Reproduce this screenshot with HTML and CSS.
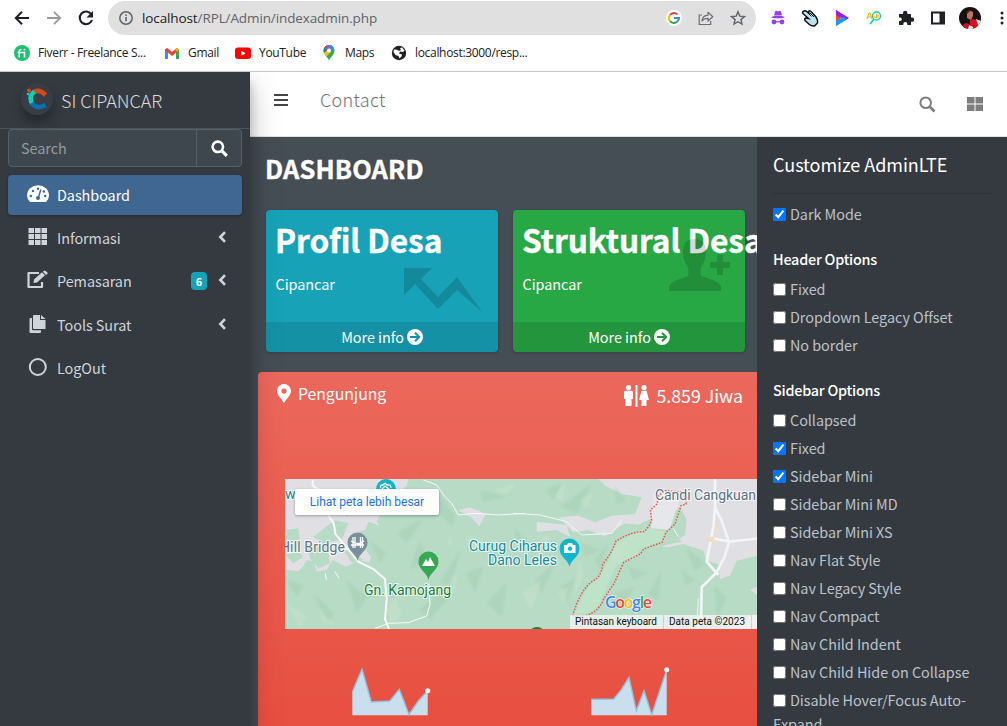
FILE: index.html
```html
<!DOCTYPE html>
<html lang="id">
<head>
<meta charset="utf-8">
<title>SI CIPANCAR</title>
<link rel="stylesheet" href="styles.css">
</head>
<body>
<header class="chrome">
  <div class="toolbar">
    <div class="slots">
      <span class="slot"><svg width="16" height="16" viewBox="0 0 16 16" fill="none" stroke="#202124" stroke-width="2"><path d="M15 8H2M8 1.8L1.8 8L8 14.2"/></svg></span>
      <span class="slot"><svg width="16" height="16" viewBox="0 0 16 16" fill="none" stroke="#9a9b9d" stroke-width="1.8"><path d="M1 8h13M8 1.8L14.2 8L8 14.2"/></svg></span>
      <span class="slot"><svg width="16" height="16" viewBox="0 0 16 16"><path d="M13.2 4.2A6.3 6.3 0 1 0 14 10" fill="none" stroke="#202124" stroke-width="2.1"/><path d="M15 1v6.5H8.5z" fill="#202124"/></svg></span>
    </div>
    <div class="omnibox">
      <svg width="16" height="16" viewBox="0 0 16 16"><circle cx="8" cy="8" r="6.2" fill="none" stroke="#5f6368" stroke-width="1.5"/><path d="M7.2 7h1.6v4.3H7.2zM7.2 4.4h1.6V6H7.2z" fill="#5f6368"/></svg>
      <span class="url"><b>localhost</b>/RPL/Admin/indexadmin.php</span>
      <div class="slots">
        <span class="slot"><svg width="16" height="16" viewBox="0 0 16 16"><circle cx="8" cy="8" r="8" fill="#fff"/><g fill="none" stroke-width="2"><path d="M4 5A5 5 0 0 1 11.6 4.4" stroke="#ea4335"/><path d="M4 5a5 5 0 0 0 0 6" stroke="#fbbc05"/><path d="M4 11a5 5 0 0 0 7.4.6" stroke="#34a853"/><path d="M8 8h5a5 5 0 0 1-1.6 3.6" stroke="#4285f4"/></g></svg></span>
        <span class="slot"><svg width="16" height="16" viewBox="0 0 16 16" fill="none" stroke="#6b6e72" stroke-width="1.2"><path d="M4 5H1.2v9.5h11.5V11"/><path d="M4 11c.4-3.7 2.500-5.600 6-5.800V2.300L14.800 6.800L10 11V8.400C7.500 8.300 5.500 9 4 11z" stroke-linejoin="round"/></svg></span>
        <span class="slot"><svg width="16" height="16" viewBox="0 0 16 16" fill="none" stroke="#5f6368" stroke-width="1.4"><path d="M8 1.800l1.800 4.300 4.700.4-3.600 3.100 1.100 4.500L8 11.700l-4 2.400 1.100-4.500L1.500 6.500l4.700-.4z"/></svg></span>
      </div>
    </div>
    <div class="slots">
      <span class="slot"><svg width="16" height="16" viewBox="0 0 16 16" fill="#9540e8"><path d="M4 5.500l1-4 1.500-.8L8 1.500l1.500-.8 1.500.8 1 4z"/><path d="M1 7.300L4 6h8l3 1.300L12 8.300H4z"/><circle cx="4" cy="12" r="2.400"/><circle cx="12" cy="12" r="2.400"/><path d="M5 11.200h6v1.200H5z"/></svg></span>
      <span class="slot"><svg width="18" height="18" viewBox="0 0 18 18"><path d="M2 2.500Q4 1 6 2.800L8 4.500 7.500 2.500Q9 1 10.500 3L15 8q2 3 1.500 6l-3 3q-3 .3-5-1.500L4 11.500Q3 9.500 5 9l2.500.5L2.500 5Q1 3.800 2 2.500z" fill="#b9e6ee" stroke="#111" stroke-width="1.500"/><path d="M6 3l4.500 4.500M9 4l4 4" stroke="#111" fill="none"/></svg></span>
      <span class="slot"><svg width="16" height="16" viewBox="0 0 16 16"><path d="M2 0v16l4-3V3z" fill="#ff4b12"/><path d="M2 0l13 8-4 2.600L2 5z" fill="#a613f5"/><path d="M2 16l11-6.500-4-2.700L2 11z" fill="#139cf5"/></svg></span>
      <span class="slot"><svg width="16" height="16" viewBox="0 0 16 16" fill="none"><path d="M0 0h16v16H0z" fill="#f3fbf7"/><path d="M1 9l2-6h1l2 6M2 7h3" stroke="#f4b400"/><circle cx="10.500" cy="6" r="4" stroke="#26c6a2" stroke-width="1.300"/><path d="M8 9l-4 5" stroke="#26c6a2" stroke-width="1.600"/><path d="M9 8V6m1.500 2V4M12 8V5" stroke="#f4b400"/></svg></span>
      <span class="slot"><svg width="16" height="16" viewBox="0 0 16 16"><path d="M1 4h4V3a2.200 2.200 0 0 1 4.400 0v1H13v3.500h1a2.100 2.100 0 0 1 0 4.200h-1V15H9.300v-1a2 2 0 0 0-4 0v1H1v-4h1a1.800 1.800 0 0 0 0-3.600H1z" fill="#202124"/></svg></span>
      <span class="slot"><svg width="16" height="16" viewBox="0 0 16 16"><path d="M1 1.500h14v13H1zM3 3.500v9h6.500v-9z" fill="#202124" fill-rule="evenodd"/></svg></span>
      <span class="slot"><svg class="avatar" width="22" height="22" viewBox="0 0 22 22"><path d="M0 0h22v22H0z" fill="#17100f"/><path d="M11 13l4-1 4 2 2 8H10z" fill="#d51220"/><path d="M3 22q0-5 4-6l3 1 1 5z" fill="#c90f20"/><path d="M17 12l5 2v6l-3-2z" fill="#eee"/><path d="M8 5q3-3 6 0l0 4-2 4-4-2z" fill="#bb755f"/><path d="M7 5q3-5 7 0l-3-1-3 3z" fill="#3a211a"/><path d="M10 18l4 2v2h-5z" fill="#eee"/></svg></span>
      <span class="slot"><svg width="4" height="16" viewBox="0 0 4 16" fill="#202124"><circle cx="2" cy="3" r="1.500"/><circle cx="2" cy="8" r="1.500"/><circle cx="2" cy="13" r="1.500"/></svg></span>
    </div>
  </div>
  <nav class="bookmarks">
    <span class="bookmark"><svg width="16" height="16" viewBox="0 0 16 16"><circle cx="8" cy="8" r="8" fill="#1dbf73"/><path d="M5.200 12.500V6.300q0-2 2.300-1.900M3.700 7.500h6.800v5" fill="none" stroke="#fff" stroke-width="1.500"/><circle cx="10.400" cy="4.700" r=".9" fill="#fff"/></svg><span>Fiverr - Freelance S...</span></span>
    <span class="bookmark"><svg width="16" height="16" viewBox="0 0 16 16" fill="none" stroke-width="3"><path d="M2.500 14V4" stroke="#4285f4"/><path d="M13.500 14V4" stroke="#34a853"/><path d="M2 4l6 5 6-5" stroke="#ea4335"/><path d="M12 5.600l2-1.500" stroke="#fbbc04"/></svg><span>Gmail</span></span>
    <span class="bookmark"><svg width="16" height="16" viewBox="0 0 16 16"><rect y="2.500" width="16" height="11.500" rx="3" fill="#f00"/><path d="M6.200 5.700v5l4.500-2.500z" fill="#fff"/></svg><span>YouTube</span></span>
    <span class="bookmark"><svg width="16" height="16" viewBox="0 0 16 16"><path d="M8 16C7.500 12 2.500 10.500 2.500 5.500a5.500 5.500 0 0 1 11 0C13.500 10.500 8.500 12 8 16z" fill="#34a853"/><path d="M3 8L11 .9A5.500 5.500 0 0 0 2.500 5.500z" fill="#1a73e8"/><path d="M3.200 2.800l3.300 2.800L11.600 1.300A5.500 5.500 0 0 0 3.200 2.800z" fill="#ea4335"/><path d="M6.500 5.600L13 3.200A5.500 5.500 0 0 0 7 .1z" fill="#4285f4"/><path d="M3 7.800L6.500 5l3 2.500L5 11.800z" fill="#fbbc04"/><circle cx="8" cy="5.500" r="2" fill="#fff"/></svg><span>Maps</span></span>
    <span class="bookmark"><svg width="16" height="16" viewBox="0 0 16 16"><circle cx="8" cy="8" r="7.200" fill="#202124"/><path d="M3 4.500l3 .2 2 1.300 2-1-1-2 2-.5 2.500 3-1.500 1.500-3-.5-1 2 3 1-.5 2-2 2-1-2.500-3-1L2.500 7z" fill="#fff"/></svg><span>localhost:3000/resp...</span></span>
  </nav>
</header>

<div class="app">
  <aside class="sidebar">
    <div class="brand">
      <span class="brand-logo"><svg width="24" height="24" viewBox="0 0 24 24" fill="none" stroke-width="4.600"><path d="M20.500 8Q14 1.500 8.500 5.500" stroke="#d24a20"/><path d="M9.500 4.500Q3 9.500 7.500 17" stroke="#18cbb0"/><path d="M6.500 16q5 7 14 2" stroke="#0a72a8"/><circle cx="4" cy="3.500" r="2" fill="#d24a20"/><circle cx="3" cy="7" r="1.300" fill="#18cbb0"/></svg></span>
      <span class="brand-text">SI CIPANCAR</span>
    </div>
    <div class="search"><span class="search-text">Search</span><span class="search-btn"><svg width="17" height="17" viewBox="0 0 17 17" fill="none" stroke="#fff"><circle cx="6.800" cy="6.800" r="5.200" stroke-width="2.600"/><path d="M10.800 10.800l5 5" stroke-width="3.200"/></svg></span></div>
    <nav class="menu">
      <div class="item active"><svg class="ico" width="22" height="18" viewBox="0 0 22 18"><path d="M3 17Q0 14 0 10.500a11 10.200 0 0 1 22 0Q22 14 19 17z" fill="#fff"/><g fill="#3f6791"><circle cx="3.800" cy="11" r="1.200"/><circle cx="6" cy="6" r="1.200"/><circle cx="11" cy="3.800" r="1.200"/><circle cx="16.800" cy="6.500" r="1.200"/><circle cx="18.200" cy="11" r="1.200"/></g><path d="M13.800 4.500L11.300 13" stroke="#3f6791" stroke-width="1.400"/><circle cx="11" cy="13" r="2" fill="#3f6791"/></svg><span>Dashboard</span></div>
      <div class="item"><svg class="ico" width="22" height="18" viewBox="0 0 22 18" fill="#ced4da"><path d="M1.500 0h5.500v5H1.500zM8 0h5.500v5H8zM14.500 0H20v5h-5.500zM1.500 6H7v5H1.500zM8 6h5.500v5H8zM14.500 6H20v5h-5.500zM1.500 12H7v5H1.500zM8 12h5.500v5H8zM14.500 12H20v5h-5.500z"/></svg><span>Informasi</span><svg class="chev" width="8" height="12" viewBox="0 0 8 12"><path d="M7 1.200L2.300 6 7 10.800" fill="none" stroke="#ced4da" stroke-width="2.600"/></svg></div>
      <div class="item"><svg class="ico" width="22" height="18" viewBox="0 0 22 18"><path d="M12 2H1.500v14H15v-5" fill="none" stroke="#ced4da" stroke-width="2.200" stroke-linejoin="round"/><path d="M6.500 12l.5-3.500 8-7.200 3 3-8 7.200zM15.900.700l1.200-1q.8-.4 1.500.2l1.800 1.700q.6.8 0 1.500L19 4z" fill="#ced4da"/></svg><span>Pemasaran</span><em class="pill">6</em><svg class="chev" width="8" height="12" viewBox="0 0 8 12"><path d="M7 1.200L2.300 6 7 10.800" fill="none" stroke="#ced4da" stroke-width="2.600"/></svg></div>
      <div class="item"><svg class="ico" width="22" height="18" viewBox="0 0 22 18" fill="#ced4da"><path d="M7 0h6v5h5.500v9H7q-1 0-1-1V1q0-1 1-1zM14 0l4.500 4H14z"/><path d="M3.500 3H5v11q0 1.200 1.300 1.200H14V17q0 1-1 1H3.500q-1 0-1-1V4q0-1 1-1z"/></svg><span>Tools Surat</span><svg class="chev" width="8" height="12" viewBox="0 0 8 12"><path d="M7 1.200L2.300 6 7 10.800" fill="none" stroke="#ced4da" stroke-width="2.600"/></svg></div>
      <div class="item"><svg class="ico" width="22" height="18" viewBox="0 0 22 18"><circle cx="10.800" cy="9" r="8" fill="none" stroke="#ced4da" stroke-width="2"/></svg><span>LogOut</span></div>
    </nav>
  </aside>

  <main class="main">
    <div class="navbar">
      <svg class="burger" width="14" height="12" viewBox="0 0 14 12"><path d="M0 0h14v2H0zM0 5h14v2H0zM0 10h14v2H0z" fill="#454545"/></svg>
      <span class="contact">Contact</span>
      <svg class="nav-search" width="17" height="17" viewBox="0 0 17 17" fill="none" stroke="#7d7d7d"><circle cx="6.700" cy="6.700" r="5.300" stroke-width="2"/><path d="M10.700 10.700l4.800 4.800" stroke-width="2.600"/></svg>
      <svg class="nav-grid" width="16" height="14" viewBox="0 0 16 14"><path d="M0 0h7.500v6.500H0zM8.500 0H16v6.500H8.500zM0 7.500h7.500V14H0zM8.500 7.500H16V14H8.500z" fill="#7d7d7d"/></svg>
    </div>
    <div class="body">
      <section class="content">
        <h1>DASHBOARD</h1>
        <div class="boxes">
          <article class="box info">
            <h3>Profil Desa</h3><p>Cipancar</p>
            <svg class="art" width="232" height="112" viewBox="0 0 232 112"><path d="M138 58h28l-11 11 17 18 19-20 25 35-25-22-19 19-23-25-11 11z" fill="#000" fill-opacity=".15"/></svg>
            <div class="more"><span>More info</span><svg width="16" height="16" viewBox="0 0 16 16"><circle cx="8" cy="8" r="8" fill="#fff"/><path d="M3 8h9M8 3.800L12.200 8 8 12.200" fill="none" stroke="#178fa3" stroke-width="2"/></svg></div>
          </article>
          <article class="box success">
            <h3>Struktural Desa</h3><p>Cipancar</p>
            <svg class="art" width="232" height="112" viewBox="0 0 232 112"><path d="M170 40q1-11 11.500-11t11.500 11q0 11-5 17-1 6 0 9l12 4q8 3 8 8v3h-52v-3q0-5 8-8l11-4q1-3 0-9-5-6-5-17zM204 45h6v7h7v6h-7v7h-6v-7h-7v-6h7z" fill="#000" fill-opacity=".15"/></svg>
            <div class="more"><span>More info</span><svg width="16" height="16" viewBox="0 0 16 16"><circle cx="8" cy="8" r="8" fill="#fff"/><path d="M3 8h9M8 3.800L12.200 8 8 12.200" fill="none" stroke="#25963e" stroke-width="2"/></svg></div>
          </article>
        </div>
        <article class="visitors">
          <div class="visitors-head">
            <svg class="pin" width="14" height="19" viewBox="0 0 14 19"><path d="M7 0a7 7 0 0 1 7 7c0 4-4 7-7 12C4 14 0 11 0 7a7 7 0 0 1 7-7zm0 4.500a2.600 2.600 0 1 0 0 5.200 2.600 2.600 0 0 0 0-5.200z" fill="#fff"/></svg>
            <span class="pengunjung">Pengunjung</span>
            <svg class="people" width="25" height="22" viewBox="0 0 25 22" fill="#fff"><circle cx="4.500" cy="2.600" r="2.600"/><path d="M1.500 5.700h6q1.500 0 1.500 1.500V14H7.500v7h-6v-7H0V7.200q0-1.500 1.500-1.500z"/><path d="M11.500 0h2v22h-2z"/><circle cx="20" cy="2.600" r="2.600"/><path d="M17.500 5.700h5L25 15h-2.500v6h-5v-6H15z"/></svg>
            <span class="jiwa">5.859 Jiwa</span>
          </div>
          <div class="map">
            <svg width="472" height="150" viewBox="0 0 472 150">
              <rect width="472" height="150" fill="#b7dbc4"/>
              <g transform="translate(-5 -9) scale(.33333)">
                <path d="M15 27h370l-5 20-55 45-35 60 8 15-32-12-10 25-20 5 15 45 22 30-5 18-30-8-40 20-40-20-18 30-30 5-8-30-20-5-15 22-12 12-40-5z" fill="#dfdfe4"/>
                <path d="M535 120l35-8 48 20-12 20-8 18-22-26z" fill="#dfdfe4"/>
                <g fill="#b7dbc4"><path d="M20 180l35-5 5 40-20 30-25-20zM70 90l60 10-15 25zM100 200l65-50 40 10-20 50-60 10zM80 225l60-5 10 60-35 15-25-30zM180 90l40-30 20 45-40 35zM15 255l40-10 15 15-30 20zM190 240l30 5 30 25-35 8z"/></g>
                <g class="relief" fill="#a6ceb4"><path d="M270 210l50 40-20 30zM350 190l80-45-50 75zM390 300l30-90 20 60zM560 310l50-20-25 80zM480 340l60-100-25 110zM100 370l60 60-15 35zM480 80l45 55-10 35-40-45zM600 60l80 20-70 15zM420 420l60-60 20 30-50 60zM20 330l50 15-20 35zM200 330l60 50-30 50zM620 400l60-60-15 100z"/></g>
                <g class="relief" fill="#c9e3cd"><path d="M370 90l45-30-20 55zM420 70l35 45-20 25zM560 200l50 10-40 35zM20 400l60 40-20 35zM120 420l50 50-45-15zM320 420l25-40 20 50-30 40zM500 350l30-45-5 70zM640 60l70-20-30 35zM500 230l10-40 8 30z"/></g>
                <g fill="none" stroke="#f8f9fa"><path d="M100 30q-10 20 20 30l18 60 12 25q15 10 15 45l70 85 45 22 35 30 5 60-5 60 12 30" stroke-width="6"/><path d="M430 30l40 15 25 35 20 20 20 35 50-5 70 5 80-5" stroke-width="3"/><path d="M325 460l60-2 55-20 10-35-3-60M325 460l-40 15M135 310l5 20M165 305l12 20" stroke-width="3"/></g>
              </g>
              <g transform="translate(230 -9) scale(.33333)">
                <path d="M250 27h480v230l-65 15-20 45-30 10-5-45-35-10-10-30-60-20-45 10-120-10-5-55-85 50-60-15-60-60 60-5 50 20 50-20 70-5 20-50-60-10-50-25z" fill="#dfdfe4"/>
                <path d="M160 190l60-10 50 20 60-40 40 5 60-30 40 40 30 40-50 10-60 40-150 30z" fill="#b7dbc4"/>
                <path d="M65 155l90 10 10 35-40-20-60 5z" fill="#dfdfe4"/>
                <path d="M735 260l-60 15-20 50-60 15-10 110 20 27h130z" fill="#b7dbc4"/>
                <path d="M705 360l30-15v35zM650 450l85-20v47h-90z" fill="#dfdfe4"/>
                <path d="M175 438l45-90 45-45 35-80 50-35 55-15 48 15-15 30-65 20-10 25-60 25-25 55-25 60-25 25z" fill="#bfe3c8"/>
                <path d="M450 150l40-35 10 5 15 30-5 45-15 10-40-25z" fill="#b7dbc4"/>
                <g class="relief" fill="#a6ceb4"><path d="M90 60l50-20-25 50zM140 110l90-70-45 90zM300 50l30 40-25 15zM240 270l40-50-25 80zM340 290l55 20-40 20zM400 370l40-70-10 90zM500 300l40 30-30 15zM200 220l55 20-45 20zM140 350l40-25-30 90zM60 330l60-50-40 90zM300 370l60-20-40 60zM510 230l60 50-30 25zM600 350l35 30-30 70zM0 180l35 30-30 40z"/></g>
                <g class="relief" fill="#c9e3cd"><path d="M195 90l40-25-20 55zM120 80l30-45-5 60zM290 250l50-40-40 80zM190 270l20 40-35 70zM130 365l30-15-10 65zM70 220l25-30 20 60zM20 370l60-40-30 90z"/></g>
                <g fill="none" stroke="#f4f5f7"><path d="M600 27v85l20 40 22 65-12 40-25 50-45 45-2 100-10 25M600 110l-5 60-20 105 35 40M595 205l50 10 85-10" stroke-width="8"/><path d="M-5 130l80 5 80 20 45 40 90-5 30-40M475 175l15 25M545 475l5-90" stroke-width="3"/></g>
                <path d="M415 70l85-5-5 20-32 95-55-5z" fill="#e6e7ea"/><path d="M580 200h18v16h-18zM603 166l12 10-12 8z" fill="#f4dfb8"/>
                <path d="M173 438q20-75 60-105 25-10 30-50 28-35 40-70 50-30 85-28 15-15 22-35l-4-30 20-18 5-25 20-15 50 5 15 10 -3 25-15 5-18 55-27 25-12 30-55 20-10 15-50 25q-15 35-30 65l-30 45q-15 40-55 50z" fill="none" stroke="#e75446" stroke-width="4.500" stroke-dasharray="4.500 4.500"/>
              </g>
              <circle cx="101" cy="10" r="10" fill="#12b5cb"/><path d="M96 9q-2-3 2-3 2-3 4 0 4-1 4 3M97 10l3-3 4 3" fill="none" stroke="#fff" stroke-width="1.300"/>
              <path d="M72.500 82c-1-7-10-10-10-18.500a10 10 0 0 1 20 0C82.500 72 73.500 75 72.500 82z" fill="#78909c"/><path d="M68 58v11M70 58v11M75.500 58v11M77.500 58v11M66 62q7 5 13 0M66 66h13" fill="none" stroke="#fff" stroke-width="1.300"/>
              <path d="M143.500 101c-1-7-10-10-10-18.500a10 10 0 0 1 20 0C153.500 91 144.500 94 143.500 101z" fill="#34a853"/><path d="M137 87l4-7 2 3 2-5 5 9z" fill="#fff"/>
              <path d="M284.500 88c-1-7-10-10-10-18.500a10 10 0 0 1 20 0C294.500 78 285.500 81 284.500 88z" fill="#12b5cb"/><path d="M279 66h3l1-2h4l1 2h2.500v8H279zM285 67.500a2.200 2.200 0 1 0 .1 0z" fill="#fff" fill-rule="evenodd"/>
              <circle cx="252" cy="157" r="9" fill="#188038"/>
              <g class="place"><text x="0" y="20" fill="#0f8b99">w</text><text x="-5" y="73" fill="#5b7383" textLength="65">Hill Bridge</text><text x="79" y="116" fill="#188038" textLength="87">Gn. Kamojang</text><text x="184" y="72" fill="#0f8b99" textLength="88">Curug Ciharus</text><text x="203" y="86" fill="#0f8b99" textLength="69">Dano Leles</text><text x="370" y="21" fill="#5b7383" textLength="101">Candi Cangkuan</text></g>
              <text class="google" x="320" y="129" textLength="47"><tspan fill="#4285f4">G</tspan><tspan fill="#ea4335">o</tspan><tspan fill="#fbbc05">o</tspan><tspan fill="#4285f4">g</tspan><tspan fill="#34a853">l</tspan><tspan fill="#ea4335">e</tspan></text>
              <path d="M285 136h187v14H285z" fill="#f5f5f5" fill-opacity=".75"/><path d="M378.500 136v14M466.500 136v14" stroke="#c7d3cc"/>
              <g class="credit"><text x="290" y="146" textLength="82">Pintasan keyboard</text><text x="384" y="146" textLength="76">Data peta ©2023</text></g>
            </svg>
            <a class="map-link">Lihat peta lebih besar</a>
          </div>
          <div class="sparks">
            <svg width="84" height="54" viewBox="0 0 84 54"><path d="M4.300 49.300V26L14 3l9.300 33 18.400-1 9.600-11.700L61 48.500 70.300 35l9.400-10.300v24.600z" fill="#c9dfed"/><path d="M4.300 26L14 3l9.300 33 18.400-1 9.600-11.700L61 48.500 70.300 35l9.400-10.300" fill="none" stroke="#92c1dc" stroke-width="1.400"/><circle cx="79.700" cy="24.700" r="2.500" fill="#f6f8fb"/></svg>
            <svg width="84" height="54" viewBox="0 0 84 54"><path d="M4.300 49.300V33.300l22.400-.3 7.600-9.300L42 11.300l7.300 33.400L57 24.700l7.700 24L79.700 3.700v45.600z" fill="#c9dfed"/><path d="M4.300 33.300l22.400-.3 7.600-9.300L42 11.300l7.300 33.400L57 24.700l7.700 24L79.700 3.700" fill="none" stroke="#92c1dc" stroke-width="1.400"/><circle cx="79.700" cy="3.700" r="2.500" fill="#f6f8fb"/></svg>
          </div>
        </article>
      </section>
      <aside class="control">
        <h5>Customize AdminLTE</h5>
        <label class="first"><input type="checkbox" checked>Dark Mode</label>
        <h6>Header Options</h6>
        <label><input type="checkbox">Fixed</label>
        <label><input type="checkbox">Dropdown Legacy Offset</label>
        <label><input type="checkbox">No border</label>
        <h6>Sidebar Options</h6>
        <label><input type="checkbox">Collapsed</label>
        <label><input type="checkbox" checked>Fixed</label>
        <label><input type="checkbox" checked>Sidebar Mini</label>
        <label><input type="checkbox">Sidebar Mini MD</label>
        <label><input type="checkbox">Sidebar Mini XS</label>
        <label><input type="checkbox">Nav Flat Style</label>
        <label><input type="checkbox">Nav Legacy Style</label>
        <label><input type="checkbox">Nav Compact</label>
        <label><input type="checkbox">Nav Child Indent</label>
        <label><input type="checkbox">Nav Child Hide on Collapse</label>
        <label><input type="checkbox">Disable Hover/Focus Auto-<br>Expand</label>
      </aside>
    </div>
  </main>
</div>
</body>
</html>
```
FILE: styles.css
```css
* { box-sizing: border-box; }
body { margin: 0; width: 1007px; height: 726px; overflow: hidden; display: flex; flex-direction: column; font: 14.4px/24px "Noto Sans CJK JP", sans-serif; letter-spacing: -.04px; color: #fff; background: #454d55; }
svg { display: block; flex: none; }
h1, h3, h5, h6, p { margin: 0; }

.chrome { height: 72px; flex: none; background: #fff; border-bottom: 1px solid #c8cac9; font-family: "Open Sans", sans-serif; overflow: hidden; }
.toolbar { display: flex; height: 36px; padding: 0 0 0 6px; gap: 6px; }
.slots { display: flex; flex: none; }
.slot { width: 32px; height: 36px; display: flex; align-items: center; justify-content: center; flex: none; }
.avatar { border-radius: 50%; }
.omnibox { width: 648px; height: 34px; margin-top: 1px; border-radius: 17px; background: #e0e0e0; display: flex; align-items: center; padding: 0 2px 0 10px; flex: none; }
.url { flex: 1; margin-left: 8px; font-size: 13.5px; color: #5f6368; letter-spacing: -.11px; }
.url b { font-weight: 400; color: #202124; }
.bookmarks { height: 34px; display: grid; grid-template-columns: 150px 71px 86px 70px 1fr; padding-left: 14px; align-items: center; font-size: 12px; letter-spacing: -.32px; color: #202124; }
.bookmark { display: flex; align-items: center; gap: 8px; white-space: nowrap; }

.app { flex: 1; display: flex; min-height: 0; }
.sidebar { width: 250px; flex: none; background: #343a40; z-index: 2; box-shadow: 0 14px 28px rgba(0,0,0,.25), 0 10px 10px rgba(0,0,0,.22); clip-path: inset(0 -40px 0 0); color: #ced4da; }
.brand { height: 57px; border-bottom: 1px solid #4b545c; display: flex; align-items: center; padding-left: 21px; }
.brand-logo { width: 32px; height: 32px; margin-top: -2px; border-radius: 50%; background: #383e45; box-shadow: 0 8px 12px rgba(0,0,0,.3); display: flex; align-items: center; justify-content: center; }
.brand-text { margin: -1px 0 0 8px; font-size: 18px; font-weight: 300; color: #d8dadc; }
.search { height: 38px; margin: 0 8px 8px; border: 1px solid #56606a; border-radius: 4px; background: #3f474e; display: flex; align-items: center; }
.search-text { flex: 1; padding-left: 12px; color: #949a9f; }
.search-btn { width: 45px; height: 36px; border-left: 1px solid #56606a; display: flex; align-items: center; justify-content: center; }
.menu { display: flex; flex-direction: column; gap: 3.2px; padding: 0 8px; }
.item { height: 40px; display: flex; align-items: center; padding: 0 16px 0 19px; border-radius: 4px; }
.active { background: #3f6791; color: #fff; box-shadow: 0 1px 3px rgba(0,0,0,.3); }
.item span { margin-left: 8px; flex: 1; }
.ico, .chev { margin-top: -2px; overflow: visible; }
.pill { width: 16px; height: 18px; margin-right: 11px; border-radius: 4px; background: #17a2b8; color: #fff; font: bold 11px/18px "Noto Sans CJK JP", sans-serif; text-align: center; }

.main { flex: 1; min-width: 0; display: flex; flex-direction: column; }
.navbar { height: 65px; flex: none; background: #fff; border-bottom: 1px solid #dee2e6; display: flex; align-items: center; padding: 0 24px 8px; color: #727272; }
.contact { margin: -3px 0 0 32px; font-size: 18px; font-weight: 300; letter-spacing: .3px; }
.burger { margin-top: -1px; }
.nav-search { margin: 8px 31px 0 auto; }
.nav-grid { margin-top: 8px; }
.body { flex: 1; min-height: 0; display: flex; }
.content { width: 507px; flex: none; overflow: hidden; background: #454d55; }
.content h1 { padding: 14px 15px 0; font-size: 25.4px; line-height: 34px; font-weight: 700; height: 73px; letter-spacing: .15px; -webkit-text-stroke: .4px #fff; }
.boxes { display: flex; gap: 15px; padding-left: 16px; }
.box { width: 232px; height: 142px; flex: none; border-radius: 4px; position: relative; box-shadow: 0 0 1px rgba(0,0,0,.13), 0 1px 3px rgba(0,0,0,.2); }
.info { background: #17a2b8; }
.success { background: #28a745; }
.box h3 { padding: 8px 9px 0; font-size: 31.6px; line-height: 42px; font-weight: 700; white-space: nowrap; -webkit-text-stroke: .4px #fff; }
.box p { padding: 12px 9.5px 0; }
.art { position: absolute; left: 0; top: 0; }
.more { position: absolute; left: 0; right: 0; bottom: 0; height: 30px; display: flex; align-items: center; justify-content: center; gap: 3px; background: rgba(0,0,0,.1); border-radius: 0 0 4px 4px; }
.visitors { width: 560px; height: 400px; margin-top: 20px; margin-left: 8px; border-radius: 4px; background: linear-gradient(180deg, #ec685c, #e74c3c 100%); }
.visitors-head { display: flex; align-items: center; height: 44px; padding-left: 19px; width: 499px; }
.pin { margin-top: -2px; }
.pengunjung { margin-left: 7px; font-size: 15.8px; }
.people { margin-left: auto; margin-top: 3px; }
.jiwa { margin: 2px 14px 0 8px; font-size: 17.8px; }
.map { margin: 63px 0 0 27px; width: 472px; height: 150px; position: relative; overflow: hidden; font-family: Roboto, sans-serif; letter-spacing: 0; }
.map-link { position: absolute; left: 10px; top: 10px; width: 144px; height: 26px; border-radius: 2px; background: #fff; box-shadow: 0 1px 3px rgba(0,0,0,.3); color: #1a73e8; font-size: 12px; line-height: 26px; text-align: center; }
.relief { opacity: .5; filter: blur(3px); }
.place { font-size: 14px; paint-order: stroke; stroke: #fff; stroke-opacity: .8; stroke-width: 2px; }
.google { font: 600 16px "Open Sans", sans-serif; paint-order: stroke; stroke: #fff; stroke-width: 1px; }
.credit { font-size: 10px; fill: #111; }
.sparks { display: flex; gap: 155px; padding: 37px 0 0 90px; }
.control { width: 250px; flex: none; background: #343a40; padding: 0 16px; overflow: hidden; color: #bcc2c9; }
.control h5 { height: 57px; padding-top: 15px; border-bottom: 1px solid #2e3338; font-size: 18px; font-weight: 400; color: #fff; }
.control h6 { font-size: 14.4px; font-weight: 500; line-height: 24px; letter-spacing: -.24px; margin: 19px 0 4px; color: #fff; }
label { display: block; height: 28px; padding-top: 2px; white-space: nowrap; }
.first { margin-top: 6px; }
input { width: 13px; height: 13px; margin: 0 4px 0 0; vertical-align: -1px; accent-color: #0075ff; }
```
